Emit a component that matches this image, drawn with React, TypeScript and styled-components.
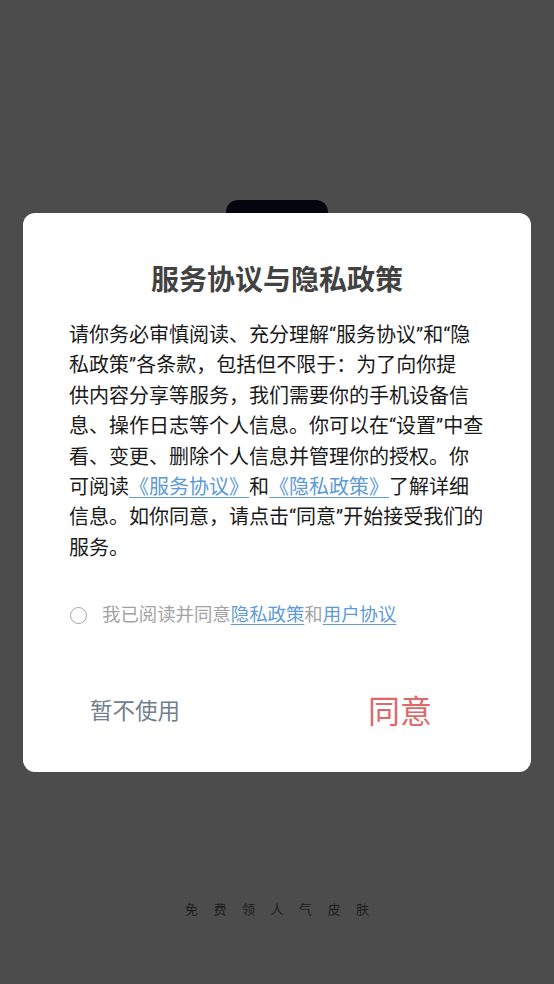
import styled, { createGlobalStyle } from "styled-components";

const GlobalStyle = createGlobalStyle`
	html, body {
		margin: 0;
		padding: 0;
		background: #4c4c4c;
	}
	body {
		font-family: "Roboto", "Noto Sans CJK SC", sans-serif;
	}
`;

const Screen = styled.div`
	width: 554px;
	min-height: 984px;
	display: flex;
	flex-direction: column;
	align-items: center;
	padding-top: 200px;
	box-sizing: border-box;
	background: #4c4c4c;
`;

const Tab = styled.div`
	width: 102px;
	height: 13px;
	border-radius: 12px 12px 0 0;
	background: #05050f;
`;

const Card = styled.div`
	width: 508px;
	box-sizing: border-box;
	background: #ffffff;
	border-radius: 12px;
	padding: 45px 0 41px;
	display: flex;
	flex-direction: column;
`;

const Title = styled.h1`
	margin: 0;
	text-align: center;
	font-family: "Noto Sans CJK SC", sans-serif;
	font-size: 28px;
	line-height: 40px;
	font-weight: 700;
	color: #424242;
`;

const Body = styled.p`
	margin: 22px 0 0;
	padding: 0 46px;
	font-size: 20px;
	line-height: 30.4px;
	color: #1a1a1a;
	white-space: nowrap;
`;

const Link = styled.a`
	color: #5d9ad6;
	text-decoration: underline;
	text-decoration-thickness: 1px;
	text-underline-offset: 3px;
`;

const AgreeRow = styled.label`
	margin-top: 40px;
	padding-left: 46px;
	display: flex;
	align-items: center;
	gap: 15px;
	font-size: 18.4px;
	line-height: 24px;
	color: #a3a3a3;
`;

const Radio = styled.span`
	width: 15px;
	height: 15px;
	margin-left: 1px;
	border: 1.8px solid #a4a4a4;
	border-radius: 50%;
	flex-shrink: 0;
`;

const Actions = styled.div`
	margin-top: 60px;
	display: grid;
	grid-template-columns: 1fr 1fr;
	align-items: center;
`;

const ActionButton = styled.button<{ $primary?: boolean }>`
	border: none;
	background: none;
	padding: 0;
	font-family: "Noto Sans CJK SC", sans-serif;
	font-size: ${(p) => (p.$primary ? "32px" : "22.5px")};
	line-height: 44px;
	color: ${(p) => (p.$primary ? "#e06868" : "#71808e")};
	text-align: ${(p) => (p.$primary ? "center" : "left")};
	padding-left: ${(p) => (p.$primary ? "0" : "67px")};
	padding-right: ${(p) => (p.$primary ? "8px" : "0")};
	cursor: pointer;
`;

const Footer = styled.div`
	margin-top: 128px;
	font-family: "Noto Sans CJK SC", sans-serif;
	font-size: 13px;
	line-height: 18px;
	letter-spacing: 15.5px;
	padding-left: 15.5px;
	color: #1e1e1e;
`;

export default function App() {
	return (
		<>
			<GlobalStyle />
			<Screen>
				<Tab />
				<Card>
					<Title>服务协议与隐私政策</Title>
					<Body>
						请你务必审慎阅读、充分理解“服务协议”和“隐
						<br />
						私政策”各条款，包括但不限于：为了向你提
						<br />
						供内容分享等服务，我们需要你的手机设备信
						<br />
						息、操作日志等个人信息。你可以在“设置”中查
						<br />
						看、变更、删除个人信息并管理你的授权。你
						<br />
						可阅读<Link>《服务协议》</Link>和<Link>《隐私政策》</Link>了解详细
						<br />
						信息。如你同意，请点击“同意”开始接受我们的
						<br />
						服务。
					</Body>
					<AgreeRow>
						<Radio />
						<span>
							我已阅读并同意<Link>隐私政策</Link>和<Link>用户协议</Link>
						</span>
					</AgreeRow>
					<Actions>
						<ActionButton>暂不使用</ActionButton>
						<ActionButton $primary>同意</ActionButton>
					</Actions>
				</Card>
				<Footer>免费领人气皮肤</Footer>
			</Screen>
		</>
	);
}
